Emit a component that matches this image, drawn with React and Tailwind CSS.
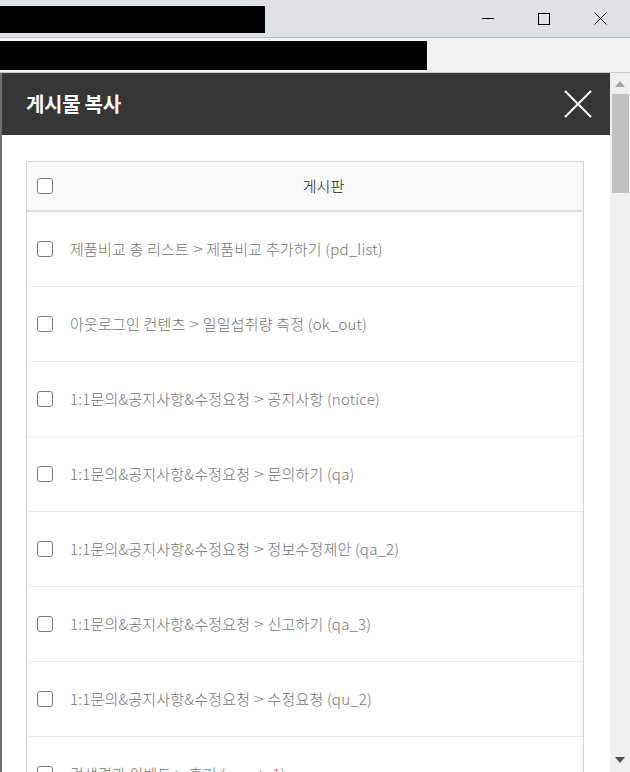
const rows = [
  ['제품비교 총 리스트', '제품비교 추가하기 (pd_list)'],
  ['아웃로그인 컨텐츠', '일일섭취량 측정 (ok_out)'],
  ['1:1문의&공지사항&수정요청', '공지사항 (notice)'],
  ['1:1문의&공지사항&수정요청', '문의하기 (qa)'],
  ['1:1문의&공지사항&수정요청', '정보수정제안 (qa_2)'],
  ['1:1문의&공지사항&수정요청', '신고하기 (qa_3)'],
  ['1:1문의&공지사항&수정요청', '수정요청 (qu_2)'],
  ['검색결과 이벤트', '후기 (event_1)'],
];

const Box = () => (
  <span className="block w-[16px] h-[16px] rounded-[3px] border-[1.5px] border-[#7a7a7a] bg-white shrink-0" />
);

export default function App() {
  return (
    <div
      className="w-[630px] h-[772px] overflow-hidden flex flex-col bg-white"
      style={{ fontFamily: '"Noto Sans CJK KR", "Noto Sans", sans-serif' }}
    >
      {/* window title bar */}
      <div className="h-[38px] shrink-0 bg-[#dee1e6] border-b border-[#b9bcc0] flex items-start">
        <div className="mt-[6px] w-[265px] h-[27px] bg-black" />
        <div className="ml-auto flex items-center h-[37px]">
          <div className="w-[56px] flex justify-center">
            <span className="block w-[12px] h-px bg-black" />
          </div>
          <div className="w-[56px] flex justify-center">
            <span className="block w-[12px] h-[12px] border border-black" />
          </div>
          <div className="w-[56px] flex justify-center mr-[2px]">
            <svg width="13" height="13" viewBox="0 0 13 13">
              <path d="M0.5 0.5 L12.5 12.5 M12.5 0.5 L0.5 12.5" stroke="#000" strokeWidth="1" />
            </svg>
          </div>
        </div>
      </div>

      {/* address bar */}
      <div className="h-[35px] shrink-0 bg-[#f1f3f4] border-b border-[#c6c8ca] flex items-start">
        <div className="mt-[3px] w-[427px] h-[29px] bg-black" />
      </div>

      {/* dialog */}
      <div className="flex-1 flex min-h-0">
        <div className="flex-1 flex flex-col border-l-2 border-[#6f6f6f] min-w-0">
          <div className="h-[62px] shrink-0 bg-[#363636] flex items-center pl-[24px] pr-[18px]">
            <h1 className="text-white text-[20px] font-bold tracking-[-0.3px]">게시물 복사</h1>
            <svg className="ml-auto" width="28" height="28" viewBox="0 0 28 28">
              <path d="M1 1 L27 27 M27 1 L1 27" stroke="#fff" strokeWidth="2" />
            </svg>
          </div>

          <div className="pt-[26px] px-[24px] pr-[26px]">
            <div className="border border-[#d3d3d3] border-b-0">
              <div className="h-[50px] bg-[#f9f9f9] border-b-2 border-[#dcdcdc] flex items-center">
                <div className="w-[43px] pl-[10px] flex items-center">
                  <Box />
                </div>
                <div className="flex-1 text-center text-[15px] font-light text-[#222] pr-[6px]">게시판</div>
              </div>
              {rows.map(([a, b], i) => (
                <div
                  key={i}
                  className="h-[75px] border-b border-[#ebebeb] flex items-center"
                >
                  <div className="w-[43px] pl-[10px] flex items-center">
                    <Box />
                  </div>
                  <div className="text-[15px] font-light text-[#737373] whitespace-nowrap tracking-[0.2px]">
                    {a} <span className="text-[#6f7d8c] inline-block scale-x-125 mx-[1px]">&gt;</span> {b}
                  </div>
                </div>
              ))}
            </div>
          </div>
        </div>

        {/* scrollbar */}
        <div className="w-[20px] shrink-0 bg-[#f0f0f0] flex flex-col items-center">
          <svg className="mt-[8px]" width="10" height="6" viewBox="0 0 10 6">
            <path d="M5 0 L10 6 L0 6 Z" fill="#a3a3a3" />
          </svg>
          <div className="mt-[7px] w-[17px] h-[99px] bg-[#c1c1c1]" />
          <svg className="mt-auto mb-[9px]" width="10" height="6" viewBox="0 0 10 6">
            <path d="M0 0 L10 0 L5 6 Z" fill="#505050" />
          </svg>
        </div>
      </div>
    </div>
  );
}
